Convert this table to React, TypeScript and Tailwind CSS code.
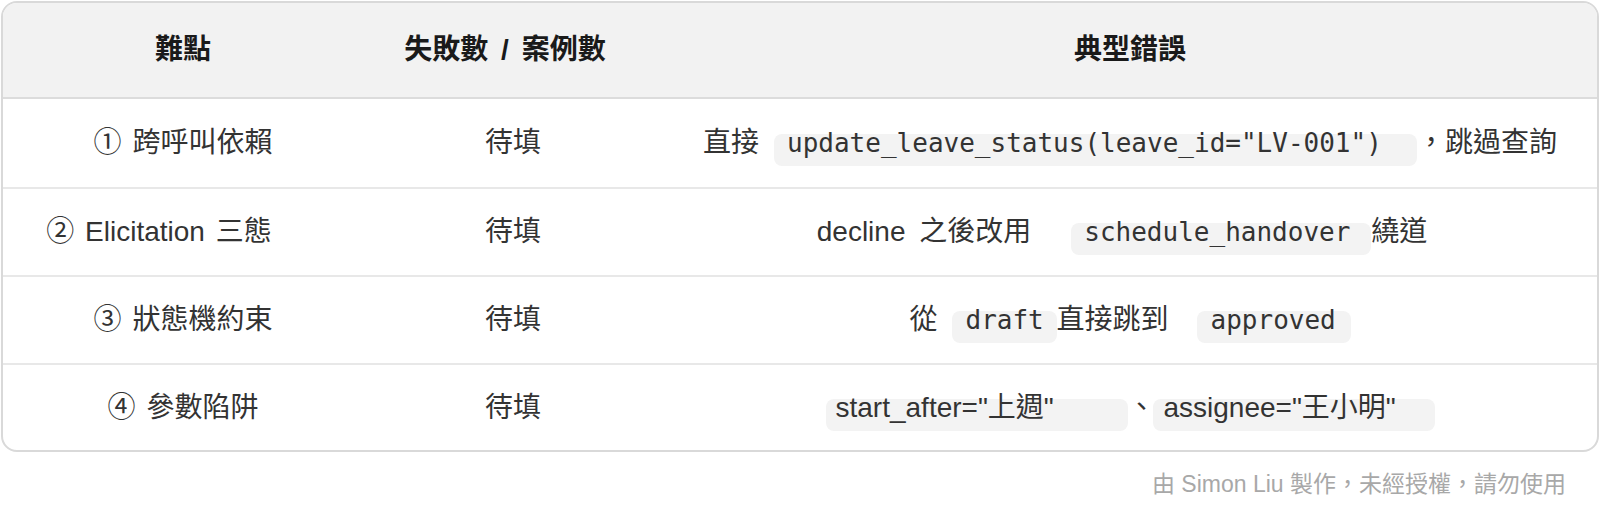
import React from "react";

const SANS = "font-['Liberation_Sans','Noto_Sans_CJK_TC',sans-serif]";

function Code({ cls, children, sans }: { cls: string; children: React.ReactNode; sans?: boolean }) {
  return (
    <span
      className={`relative top-[7px] inline-flex h-[32px] shrink-0 items-center rounded-[8px] bg-[#f3f3f3] ${cls}`}
    >
      <span
        className={`relative -top-[7px] whitespace-pre text-[#333333] ${
          sans
            ? "text-[28px] font-['Liberation_Sans','Noto_Sans_CJK_TC',sans-serif]"
            : "text-[26px] font-['DejaVu_Sans_Mono','Noto_Sans_CJK_TC',monospace]"
        }`}
      >
        {children}
      </span>
    </span>
  );
}

function Row({
  h,
  c1,
  c1cls,
  c3,
  c3cls,
  first,
}: {
  h: string;
  c1: string;
  c1cls?: string;
  c3: React.ReactNode;
  c3cls?: string;
  first?: boolean;
}) {
  return (
    <div className={`grid grid-cols-[360px_300px_1fr] ${h} ${first ? "" : "border-t-2 border-[#e8e8e8]"}`}>
      <div className={`flex items-center justify-center whitespace-pre [word-spacing:3px] ${c1cls ?? ""}`}>{c1}</div>
      <div className="flex items-center justify-center">待填</div>
      <div className={`flex items-center justify-center whitespace-pre ${c3cls ?? ""}`}>{c3}</div>
    </div>
  );
}

export default function App() {
  return (
    <div className={`min-h-[517px] w-[1600px] bg-white ${SANS} text-[28px] text-[#333333]`}>
      <div className="ml-[1px] mt-[1px] w-[1598px] overflow-hidden rounded-[16px] border-2 border-[#d9d9d9]">
        <div className="grid h-[96px] grid-cols-[360px_300px_1fr] border-b-2 border-[#dcdcdc] bg-[#f2f2f2] font-bold text-[#1a1a1a]">
          <div className="flex items-center justify-center">難點</div>
          <div className="flex items-center justify-center pr-[16px] whitespace-pre [word-spacing:5px]">失敗數 / 案例數</div>
          <div className="flex items-center justify-center">典型錯誤</div>
        </div>
        <Row
          first
          h="h-[88px]"
          c1="① 跨呼叫依賴"
          c3={
            <>
              <span>直接</span>
              <Code cls="ml-[15px] w-[643px] pl-[13px]">update_leave_status(leave_id="LV-001")</Code>
              <span>，跳過查詢</span>
            </>
          }
        />
        <Row
          h="h-[88px]"
          c1="② Elicitation 三態"
          c1cls="pr-[48px]"
          c3cls="pr-[16px]"
          c3={
            <>
              <span className="[word-spacing:6px]">decline 之後改用</span>
              <Code cls="ml-[40px] w-[300px] pl-[13px]">schedule_handover</Code>
              <span>繞道</span>
            </>
          }
        />
        <Row
          h="h-[88px]"
          c1="③ 狀態機約束"
          c3={
            <>
              <span>從</span>
              <Code cls="ml-[14px] w-[105px] pl-[14px]">draft</Code>
              <span>直接跳到</span>
              <Code cls="ml-[28px] w-[154px] pl-[14px]">approved</Code>
            </>
          }
        />
        <Row
          h="h-[87px]"
          c1="④ 參數陷阱"
          c3={
            <>
              <Code sans cls="w-[302px] pl-[10px]">start_after="上週"</Code>
              <span className="w-[25px] text-center">、</span>
              <Code sans cls="w-[282px] pl-[11px]">assignee="王小明"</Code>
            </>
          }
        />
      </div>
      <div className="mt-[16px] flex w-[1566px] justify-end text-[23px] leading-[32px] text-[#a8a8a8]">
        由 Simon Liu 製作，未經授權，請勿使用
      </div>
    </div>
  );
}
